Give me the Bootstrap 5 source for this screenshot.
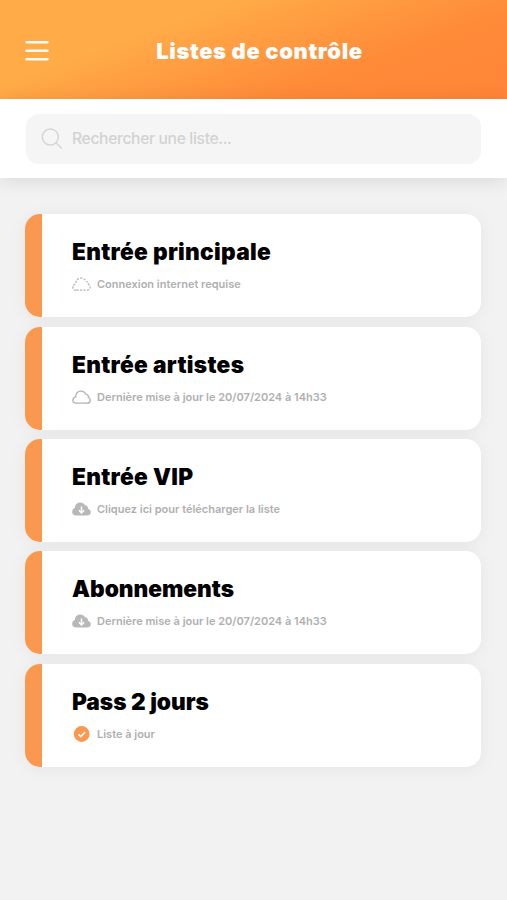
<!DOCTYPE html>
<html lang="fr">
<head>
<meta charset="utf-8">
<meta name="viewport" content="width=device-width, initial-scale=1">
<title>Listes de contrôle</title>
<link href="https://cdn.jsdelivr.net/npm/bootstrap@5.3.0/dist/css/bootstrap.min.css" rel="stylesheet">
<style>
body{background:#f2f2f2;font-family:Inter,"Liberation Sans",sans-serif;min-height:900px;overflow:hidden}
.app-header{height:99px;background:linear-gradient(160deg,#ffab48 0%,#ffab48 30%,#ff8a38 70%,#ff8538 100%);padding:3px 13px 0 25px}
.app-title{font-size:22px;font-weight:900;line-height:28px;letter-spacing:.6px}
.menu-btn,.title-balance{width:24px}
.search-panel{height:79px;padding:14.500px 26px 0;box-shadow:0 3px 18px rgba(0,0,0,.1)}
.search-box{height:50px;background:#f5f5f5;border-radius:13px;padding-left:15px;gap:9px}
.search-field{font-size:15.600px;font-weight:500;color:#d2d2d2;letter-spacing:-.32px;line-height:24px}
.search-field::placeholder{color:#d2d2d2;opacity:1}
.lists{padding:36.400px 26px 0 25px;gap:9.300px}
.list-card{height:103px;border-radius:15px;box-shadow:0 2px 18px rgba(0,0,0,.055)}
.card-stripe{width:17px;background:#fa984f;border-radius:15px 0 0 15px}
.card-text-area{padding:22.100px 20px 0 30px}
.list-name{font-size:22.700px;font-weight:900;line-height:32px;color:#000;letter-spacing:.3px}
.name-tight{letter-spacing:-.02px}
.list-status{font-size:11px;font-weight:600;line-height:16px;color:#afafaf;gap:6px;margin-top:8px}
</style>
<script src="https://cdn.jsdelivr.net/npm/bootstrap@5.3.0/dist/js/bootstrap.bundle.min.js"></script>
</head>
<body>
<svg width="0" height="0" class="d-block" aria-hidden="true"><defs>
<path id="cloud" d="M4.200 14.200C1.800 14.200.7 12.900.8 11c.1-1.700 1.200-2.600 2.900-3.100C3.900 4.300 6 2.100 8.900 2.100c2.400 0 4.200 1.200 4.900 3.100 1.900.3 2.700 1.600 2.700 3.300 1.300.7 1.900 1.800 1.700 3.100-.2 1.600-1.400 2.600-3.400 2.600z"/>
<g id="cloud-down"><path fill="#b8b8b8" d="M4.500 14.500C1.500 14.500.2 13 .2 11c0-1.800 1-3.100 2.600-3.900C3 3.600 5.100 1.400 8 1.400c2.300 0 4 1 4.900 2.800 2.200.1 3.300 1.500 3 3.500 1.800.7 2.900 1.900 2.900 3.500 0 2.100-1.600 3.300-4 3.300z"/><path d="M9.500 5.500v6M6.900 9.200l2.600 2.700 2.600-2.700" fill="none" stroke="#fff" stroke-width="1.500"/></g>
</defs></svg>
<header class="app-header d-flex align-items-center justify-content-between">
<button class="menu-btn btn p-0 border-0 d-flex" aria-label="Menu"><svg width="24" height="22" viewBox="0 0 24 22"><path d="M1.500 2.200h21M1.500 10.700h21M1.500 19.200h21" stroke="#fff" stroke-opacity=".94" stroke-width="2.400" stroke-linecap="round"/></svg></button>
<h1 class="app-title text-white m-0 text-nowrap">Listes de contrôle</h1>
<span class="title-balance"></span>
</header>
<div class="search-panel bg-white">
<label class="search-box d-flex align-items-center">
<svg class="flex-shrink-0" width="22" height="22" viewBox="0 0 22 22" fill="none" stroke="#d6d6d6" stroke-width="1.500" stroke-linecap="round"><circle cx="9.300" cy="9" r="8"/><path d="M15 14.800l5.500 5.500"/></svg>
<input class="search-field border-0 bg-transparent p-0 w-75" type="text" placeholder="Rechercher une liste...">
</label>
</div>
<main class="lists d-flex flex-column">
<article class="list-card d-flex bg-white"><div class="card-stripe"></div><div class="card-text-area"><h2 class="list-name m-0">Entrée principale</h2><div class="list-status d-flex align-items-center"><svg width="19" height="16" viewBox="0 0 19 16"><use href="#cloud" fill="none" stroke="#b2b2b2" stroke-width="1.200" stroke-dasharray="2.200 1.300"/></svg><span>Connexion internet requise</span></div></div></article>
<article class="list-card d-flex bg-white"><div class="card-stripe"></div><div class="card-text-area"><h2 class="list-name m-0">Entrée artistes</h2><div class="list-status d-flex align-items-center"><svg width="19" height="16" viewBox="0 0 19 16"><use href="#cloud" fill="none" stroke="#b2b2b2" stroke-width="1.300"/></svg><span>Dernière mise à jour le 20/07/2024 à 14h33</span></div></div></article>
<article class="list-card d-flex bg-white"><div class="card-stripe"></div><div class="card-text-area"><h2 class="list-name m-0">Entrée VIP</h2><div class="list-status d-flex align-items-center"><svg width="19" height="16" viewBox="0 0 19 16"><use href="#cloud-down"/></svg><span>Cliquez ici pour télécharger la liste</span></div></div></article>
<article class="list-card d-flex bg-white"><div class="card-stripe"></div><div class="card-text-area"><h2 class="list-name name-tight m-0">Abonnements</h2><div class="list-status d-flex align-items-center"><svg width="19" height="16" viewBox="0 0 19 16"><use href="#cloud-down"/></svg><span>Dernière mise à jour le 20/07/2024 à 14h33</span></div></div></article>
<article class="list-card d-flex bg-white"><div class="card-stripe"></div><div class="card-text-area"><h2 class="list-name name-tight m-0">Pass 2 jours</h2><div class="list-status d-flex align-items-center"><svg width="19" height="16" viewBox="0 0 19 16"><circle cx="9.700" cy="8" r="7.900" fill="#fa984f"/><path d="M6.500 8.300l2.300 2.200 4.400-4.500" fill="none" stroke="#fff" stroke-width="1.700"/></svg><span>Liste à jour</span></div></div></article>
</main>
</body>
</html>
